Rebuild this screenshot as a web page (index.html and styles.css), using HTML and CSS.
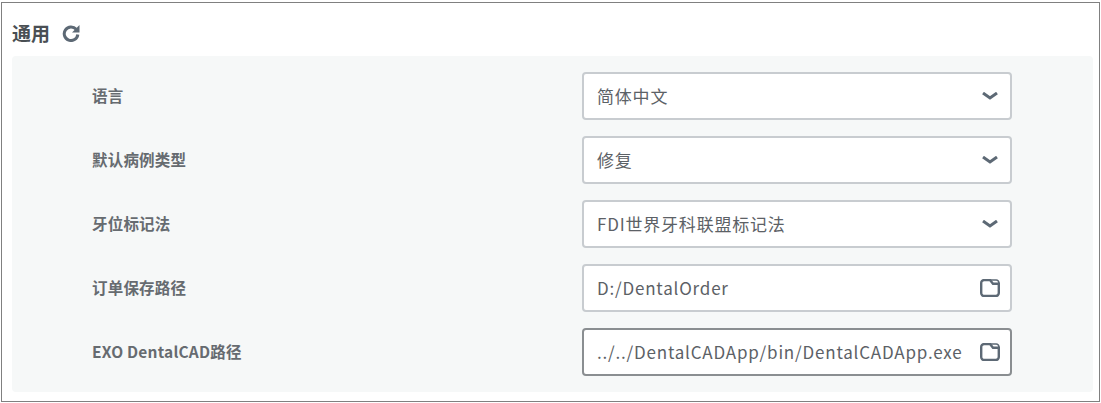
FILE: index.html
```html
<!DOCTYPE html>
<html lang="zh-CN">
<head>
  <meta charset="UTF-8">
  <title>通用</title>
  <link rel="stylesheet" href="styles.css">
</head>
<body>
  <div class="frame">
    <h2 class="title">通用
      <svg class="reload" viewBox="0 0 18 18" width="18" height="18"><path d="M14.200 5.300A6.800 6.800 0 1 0 15.800 10.500" fill="none" stroke="#5d6975" stroke-width="3"/><path d="M17.500 1V8.500H10Z" fill="#5d6975"/></svg>
    </h2>
    <div class="panel">
      <div class="row">
        <label class="name">语言</label>
        <div class="field"><span class="value">简体中文</span>
          <svg class="chevron" viewBox="0 0 16 8" width="16" height="8"><path d="M1 1 8 6 15 1" fill="none" stroke="#5d6975" stroke-width="3"/></svg>
        </div>
      </div>
      <div class="row">
        <label class="name">默认病例类型</label>
        <div class="field"><span class="value">修复</span>
          <svg class="chevron" viewBox="0 0 16 8" width="16" height="8"><path d="M1 1 8 6 15 1" fill="none" stroke="#5d6975" stroke-width="3"/></svg>
        </div>
      </div>
      <div class="row">
        <label class="name">牙位标记法</label>
        <div class="field"><span class="value">FDI世界牙科联盟标记法</span>
          <svg class="chevron" viewBox="0 0 16 8" width="16" height="8"><path d="M1 1 8 6 15 1" fill="none" stroke="#5d6975" stroke-width="3"/></svg>
        </div>
      </div>
      <div class="row">
        <label class="name">订单保存路径</label>
        <div class="field"><span class="value">D:/DentalOrder</span>
          <svg class="folder" viewBox="0 0 20 18" width="20" height="18"><path d="M1.200 4a3 3 0 0 1 3-3h5.800l3 3.800h5.800V14a3 3 0 0 1-3 3H4.200a3 3 0 0 1-3-3Z" fill="none" stroke="#5d6975" stroke-width="2.400"/><path d="M10 1h6.300a2.500 2.500 0 0 1 2.500 2.500v1.300" fill="none" stroke="#5d6975" stroke-width="1.600"/></svg>
        </div>
      </div>
      <div class="row">
        <label class="name">EXO DentalCAD路径</label>
        <div class="field active"><span class="value">../../DentalCADApp/bin/DentalCADApp.exe</span>
          <svg class="folder" viewBox="0 0 20 18" width="20" height="18"><path d="M1.200 4a3 3 0 0 1 3-3h5.800l3 3.800h5.800V14a3 3 0 0 1-3 3H4.200a3 3 0 0 1-3-3Z" fill="none" stroke="#5d6975" stroke-width="2.400"/><path d="M10 1h6.300a2.500 2.500 0 0 1 2.500 2.500v1.300" fill="none" stroke="#5d6975" stroke-width="1.600"/></svg>
        </div>
      </div>
    </div>
  </div>
</body>
</html>
```

FILE: styles.css
```css
body {
  margin: 0;
  padding: 2px 1px 1px 1px;
  background: #fff;
  font-family: "Noto Sans CJK SC", "Noto Sans", sans-serif;
  color: #5c6166;
}

.frame {
  height: 400px;
  box-sizing: border-box;
  border: 1px solid #808080;
  padding: 0 6px 9px 10px;
}

.title {
  display: flex;
  align-items: center;
  gap: 12px;
  height: 53px;
  margin: 0;
  padding-top: 6px;
  box-sizing: border-box;
  font-size: 19px;
  font-weight: 700;
  color: #4a4f54;
}

.panel {
  display: flex;
  flex-direction: column;
  gap: 16px;
  padding: 16px 81px 16px 80px;
  background: #f6f8f8;
  border-radius: 4px;
}

.row {
  display: flex;
  align-items: center;
  justify-content: space-between;
  height: 48px;
}

.name {
  padding-bottom: 2px;
  font-size: 15.500px;
  font-weight: 700;
  letter-spacing: 0.2px;
  color: #666b70;
}

.field {
  display: flex;
  align-items: center;
  justify-content: space-between;
  width: 430px;
  height: 48px;
  box-sizing: border-box;
  padding: 0 10px 0 13px;
  background: #fff;
  border: 2px solid #c8ccd0;
  border-radius: 4px;
  font-size: 17px;
  letter-spacing: 0.8px;
}

.field.active {
  border-color: #8a8e91;
}

.value {
  padding-bottom: 2px;
  color: #5c6166;
}

.chevron, .folder {
  flex: none;
}

.chevron {
  margin-right: 2px;
  margin-left: 3px;
}
```
